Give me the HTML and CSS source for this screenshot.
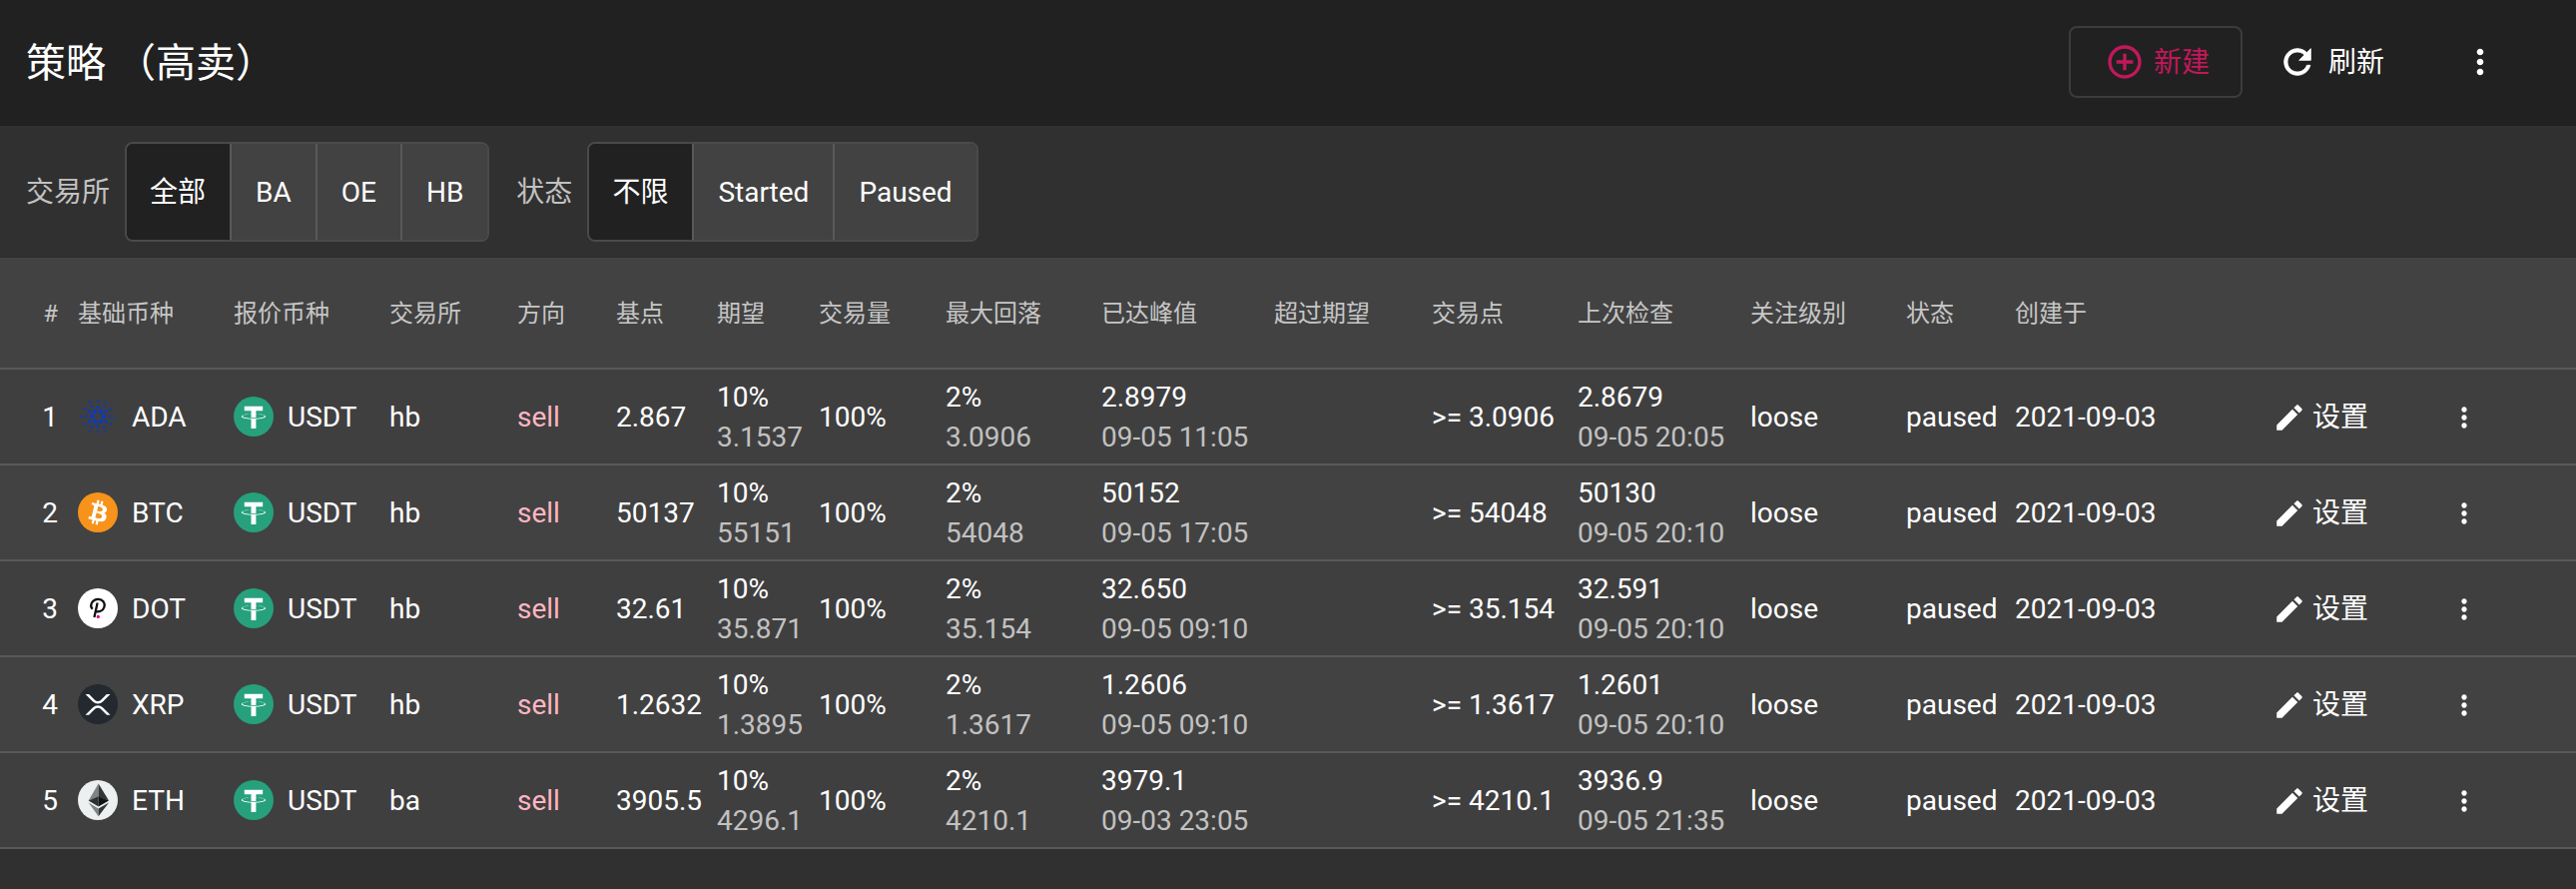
FILE: index.html
```html
<!DOCTYPE html>
<html lang="zh-CN">
<head>
<meta charset="utf-8">
<title>策略（高卖）</title>
<link rel="stylesheet" href="styles.css">
</head>
<body>
<svg class="sprite" aria-hidden="true">
  <symbol id="more" viewBox="0 0 24 24"><path d="M12 8c1.1 0 2-.9 2-2s-.9-2-2-2-2 .9-2 2 .9 2 2 2zm0 2c-1.1 0-2 .9-2 2s.9 2 2 2 2-.9 2-2-.9-2-2-2zm0 6c-1.1 0-2 .9-2 2s.9 2 2 2 2-.9 2-2-.9-2-2-2z"/></symbol>
  <symbol id="edit" viewBox="0 0 24 24"><path d="M3 17.25V21h3.75L17.81 9.94l-3.75-3.75L3 17.25zM20.71 7.04c.39-.39.39-1.02 0-1.41l-2.34-2.34c-.39-.39-1.02-.39-1.41 0l-1.83 1.83 3.75 3.75 1.83-1.83z"/></symbol>
  <symbol id="usdt" viewBox="0 0 32 32"><circle cx="16" cy="16" r="16" fill="#26a17b"/><path fill="#fff" d="M17.922 17.383v-.002c-.11.008-.677.042-1.942.042-1.01 0-1.721-.03-1.971-.042v.003c-3.888-.171-6.79-.848-6.79-1.658 0-.809 2.902-1.486 6.79-1.66v2.644c.254.018.982.061 1.988.061 1.207 0 1.812-.05 1.925-.06v-2.643c3.88.173 6.775.85 6.775 1.658 0 .81-2.895 1.485-6.775 1.657m0-3.59v-2.366h5.414V7.819H8.595v3.608h5.414v2.365c-4.4.202-7.709 1.074-7.709 2.118 0 1.044 3.309 1.915 7.709 2.118v7.582h3.913v-7.584c4.393-.202 7.694-1.073 7.694-2.116 0-1.043-3.301-1.914-7.694-2.117"/></symbol>
  <symbol id="btc" viewBox="0 0 32 32"><circle cx="16" cy="16" r="16" fill="#f7931a"/><path fill="#fff" d="M23.189 14.02c.314-2.096-1.283-3.223-3.465-3.975l.708-2.84-1.728-.43-.69 2.765c-.454-.114-.92-.22-1.385-.326l.695-2.783L15.596 6l-.708 2.839c-.376-.086-.746-.17-1.104-.26l.002-.009-2.384-.595-.46 1.846s1.283.294 1.256.312c.7.175.826.638.805 1.006l-.806 3.235c.048.012.11.03.18.057l-.183-.045-1.13 4.532c-.086.212-.303.531-.793.41.018.025-1.256-.313-1.256-.313l-.858 1.978 2.25.561c.418.105.828.215 1.231.318l-.715 2.872 1.727.43.708-2.84c.472.127.93.245 1.378.357l-.706 2.828 1.728.43.715-2.866c2.948.558 5.164.333 6.097-2.333.752-2.146-.037-3.385-1.588-4.192 1.13-.26 1.98-1.003 2.207-2.538zm-3.95 5.538c-.533 2.147-4.148.986-5.32.695l.95-3.805c1.172.293 4.929.872 4.37 3.11zm.535-5.569c-.487 1.953-3.495.96-4.47.717l.86-3.45c.975.243 4.118.696 3.61 2.733z"/></symbol>
  <symbol id="xrp" viewBox="0 0 32 32"><circle cx="16" cy="16" r="16" fill="#23292f"/><path fill="#fff" d="M23.07 8h2.89l-6.015 5.957a5.621 5.621 0 01-7.89 0L6.035 8H8.93l4.57 4.523a3.556 3.556 0 004.996 0L23.07 8zM8.895 24.563H6l6.055-5.993a5.621 5.621 0 017.89 0L26 24.562h-2.895L18.5 20a3.556 3.556 0 00-4.996 0l-4.61 4.563z"/></symbol>
  <symbol id="dot" viewBox="0 0 40 40"><circle cx="20" cy="20" r="20" fill="#fff"/><path fill="none" stroke="#111" stroke-width="2.3" d="M14.7 20.8C13 19 12.9 16 14.5 13.7C17 10 23 9.9 25.5 13.2C27.9 16.6 26.4 21.4 22.8 22.8C21 23.5 19.4 23.3 18 23.2M19.6 14.6L16.4 29"/><circle cx="20.3" cy="28.4" r="1.6" fill="#e6007a"/></symbol>
  <symbol id="eth" viewBox="0 0 40 40"><circle cx="20" cy="20" r="20" fill="#ecf0f1"/><path fill="#828384" d="M20.6 3.4V16.4L10.6 20.5z"/><path fill="#343535" d="M20.6 3.4V16.4L31 20.5z"/><path fill="#2f3030" d="M20.6 16.2V26.4L10.6 20.5z"/><path fill="#131313" d="M20.6 16.2V26.4L31 20.5z"/><path fill="#828384" d="M10.6 22.6L20.6 28.6V36.3z"/><path fill="#343535" d="M31 22.6L20.6 28.6V36.3z"/></symbol>
  <symbol id="ada" viewBox="-20 -20 40 40"><g fill="#0d3abf">
    <circle cx="-5.700" cy="0" r="2.3"/><circle cx="5.700" cy="0" r="2.3"/><circle cx="-2.900" cy="-5" r="2.3"/><circle cx="2.900" cy="-5" r="2.3"/><circle cx="-2.900" cy="5" r="2.3"/><circle cx="2.900" cy="5" r="2.3"/>
    <circle cx="0" cy="-9.8" r="1.5"/><circle cx="0" cy="9.8" r="1.5"/><circle cx="-8.4" cy="-5" r="1.7"/><circle cx="8.4" cy="-5" r="1.7"/><circle cx="-8.4" cy="5" r="1.7"/><circle cx="8.4" cy="5" r="1.7"/>
    <g opacity=".85"><circle cx="-12" cy="0" r="1.4"/><circle cx="12" cy="0" r="1.4"/><circle cx="-6" cy="-10.6" r="1.4"/><circle cx="6" cy="-10.6" r="1.4"/><circle cx="-6" cy="10.6" r="1.4"/><circle cx="6" cy="10.6" r="1.4"/>
    <circle cx="-13" cy="-7.6" r="1.4"/><circle cx="13" cy="-7.6" r="1.4"/><circle cx="-13" cy="7.6" r="1.4"/><circle cx="13" cy="7.6" r="1.4"/><circle cx="0" cy="-15.2" r="1.3"/><circle cx="0" cy="15.2" r="1.3"/>
    <circle cx="-8" cy="-14.6" r="1.2"/><circle cx="8" cy="-14.6" r="1.2"/><circle cx="-8" cy="14.6" r="1.2"/><circle cx="8" cy="14.6" r="1.2"/><circle cx="-16.6" cy="0" r="1.2"/><circle cx="16.6" cy="0" r="1.2"/></g>
  </g></symbol>
</svg>

<header class="toolbar">
  <h1 class="title">策略 （高卖）</h1>
  <button type="button" class="btn btn-new"><svg class="icon" viewBox="0 0 24 24"><path d="M13 7h-2v4H7v2h4v4h2v-4h4v-2h-4V7zm-1-5C6.48 2 2 6.48 2 12s4.480 10 10 10 10-4.480 10-10S17.520 2 12 2zm0 18c-4.410 0-8-3.590-8-8s3.590-8 8-8 8 3.590 8 8-3.590 8-8 8z"/></svg>新建</button>
  <button type="button" class="btn btn-refresh"><svg class="icon" viewBox="0 0 24 24"><path d="M17.650 6.350C16.200 4.900 14.210 4 12 4c-4.420 0-7.990 3.580-7.990 8s3.570 8 7.990 8c3.730 0 6.840-2.550 7.730-6h-2.080c-.82 2.330-3.040 4-5.650 4-3.310 0-6-2.690-6-6s2.690-6 6-6c1.660 0 3.140.69 4.220 1.780L13 11h7V4l-2.350 2.350z" stroke="currentColor" stroke-width=".5"/></svg>刷新</button>
  <button type="button" class="btn btn-menu" aria-label="更多"><svg class="icon"><use href="#more"/></svg></button>
</header>

<div class="filters">
  <span class="label" id="lbl-exchange">交易所</span>
  <div class="toggle" role="group" aria-labelledby="lbl-exchange">
    <button type="button" class="option selected" aria-pressed="true">全部</button><button type="button" class="option">BA</button><button type="button" class="option">OE</button><button type="button" class="option">HB</button>
  </div>
  <span class="label" id="lbl-state">状态</span>
  <div class="toggle" role="group" aria-labelledby="lbl-state">
    <button type="button" class="option selected" aria-pressed="true">不限</button><button type="button" class="option">Started</button><button type="button" class="option">Paused</button>
  </div>
</div>

<table class="grid">
  <colgroup>
    <col class="c-num"><col class="c-coin"><col class="c-coin"><col class="c-ex"><col class="c-side"><col class="c-base"><col class="c-expect"><col class="c-volume"><col class="c-drop"><col class="c-peak"><col class="c-over"><col class="c-point"><col class="c-check"><col class="c-watch"><col class="c-state"><col class="c-created"><col class="c-edit"><col>
  </colgroup>
  <thead>
    <tr><th class="num">#</th><th>基础币种</th><th>报价币种</th><th>交易所</th><th>方向</th><th>基点</th><th>期望</th><th>交易量</th><th>最大回落</th><th>已达峰值</th><th>超过期望</th><th>交易点</th><th>上次检查</th><th>关注级别</th><th>状态</th><th>创建于</th><th></th><th></th></tr>
  </thead>
  <tbody>
    <tr><td class="num">1</td><td><div class="coin"><svg class="logo"><use href="#ada"/></svg>ADA</div></td><td><div class="coin"><svg class="logo"><use href="#usdt"/></svg>USDT</div></td><td>hb</td><td class="sell">sell</td><td>2.867</td><td>10%<div class="sub">3.1537</div></td><td>100%</td><td>2%<div class="sub">3.0906</div></td><td>2.8979<div class="sub">09-05 11:05</div></td><td></td><td>&gt;= 3.0906</td><td>2.8679<div class="sub">09-05 20:05</div></td><td>loose</td><td>paused</td><td>2021-09-03</td><td><button type="button" class="btn btn-edit"><svg class="icon-edit"><use href="#edit"/></svg>设置</button></td><td><button type="button" class="btn" aria-label="更多"><svg class="icon-row"><use href="#more"/></svg></button></td></tr>
    <tr><td class="num">2</td><td><div class="coin"><svg class="logo"><use href="#btc"/></svg>BTC</div></td><td><div class="coin"><svg class="logo"><use href="#usdt"/></svg>USDT</div></td><td>hb</td><td class="sell">sell</td><td>50137</td><td>10%<div class="sub">55151</div></td><td>100%</td><td>2%<div class="sub">54048</div></td><td>50152<div class="sub">09-05 17:05</div></td><td></td><td>&gt;= 54048</td><td>50130<div class="sub">09-05 20:10</div></td><td>loose</td><td>paused</td><td>2021-09-03</td><td><button type="button" class="btn btn-edit"><svg class="icon-edit"><use href="#edit"/></svg>设置</button></td><td><button type="button" class="btn" aria-label="更多"><svg class="icon-row"><use href="#more"/></svg></button></td></tr>
    <tr><td class="num">3</td><td><div class="coin"><svg class="logo"><use href="#dot"/></svg>DOT</div></td><td><div class="coin"><svg class="logo"><use href="#usdt"/></svg>USDT</div></td><td>hb</td><td class="sell">sell</td><td>32.61</td><td>10%<div class="sub">35.871</div></td><td>100%</td><td>2%<div class="sub">35.154</div></td><td>32.650<div class="sub">09-05 09:10</div></td><td></td><td>&gt;= 35.154</td><td>32.591<div class="sub">09-05 20:10</div></td><td>loose</td><td>paused</td><td>2021-09-03</td><td><button type="button" class="btn btn-edit"><svg class="icon-edit"><use href="#edit"/></svg>设置</button></td><td><button type="button" class="btn" aria-label="更多"><svg class="icon-row"><use href="#more"/></svg></button></td></tr>
    <tr><td class="num">4</td><td><div class="coin"><svg class="logo"><use href="#xrp"/></svg>XRP</div></td><td><div class="coin"><svg class="logo"><use href="#usdt"/></svg>USDT</div></td><td>hb</td><td class="sell">sell</td><td>1.2632</td><td>10%<div class="sub">1.3895</div></td><td>100%</td><td>2%<div class="sub">1.3617</div></td><td>1.2606<div class="sub">09-05 09:10</div></td><td></td><td>&gt;= 1.3617</td><td>1.2601<div class="sub">09-05 20:10</div></td><td>loose</td><td>paused</td><td>2021-09-03</td><td><button type="button" class="btn btn-edit"><svg class="icon-edit"><use href="#edit"/></svg>设置</button></td><td><button type="button" class="btn" aria-label="更多"><svg class="icon-row"><use href="#more"/></svg></button></td></tr>
    <tr><td class="num">5</td><td><div class="coin"><svg class="logo"><use href="#eth"/></svg>ETH</div></td><td><div class="coin"><svg class="logo"><use href="#usdt"/></svg>USDT</div></td><td>ba</td><td class="sell">sell</td><td>3905.5</td><td>10%<div class="sub">4296.1</div></td><td>100%</td><td>2%<div class="sub">4210.1</div></td><td>3979.1<div class="sub">09-03 23:05</div></td><td></td><td>&gt;= 4210.1</td><td>3936.9<div class="sub">09-05 21:35</div></td><td>loose</td><td>paused</td><td>2021-09-03</td><td><button type="button" class="btn btn-edit"><svg class="icon-edit"><use href="#edit"/></svg>设置</button></td><td><button type="button" class="btn" aria-label="更多"><svg class="icon-row"><use href="#more"/></svg></button></td></tr>
  </tbody>
</table>
</body>
</html>
```

FILE: styles.css
```css
* { box-sizing: border-box; }

body {
  margin: 0;
  background: #303030;
  color: #fff;
  font: 400 28px/40px Roboto, "Noto Sans CJK SC", sans-serif;
}

.sprite { display: none; }

/* Buttons and icons */
.btn {
  display: inline-flex;
  align-items: center;
  padding: 0;
  border: 0;
  background: none;
  color: inherit;
  font: inherit;
}
.btn svg { fill: currentColor; flex: none; }
.icon { width: 40px; height: 40px; }
.icon-edit { width: 34px; height: 34px; }
.icon-row { width: 32px; height: 32px; }

/* Top toolbar */
.toolbar {
  display: flex;
  align-items: center;
  height: 126px;
  padding: 0 76px 2px 26px;
  background: #212121;
}
.title {
  flex: 1;
  margin: 0;
  padding-top: 4px;
  font-size: 40px;
  font-weight: 400;
  line-height: 56px;
}
.btn-new {
  height: 72px;
  padding: 2px 31px 0 34px;
  gap: 9px;
  border: 2px solid rgba(255, 255, 255, .12);
  border-radius: 8px;
  color: #c2185b;
}
.btn-refresh { gap: 11px; margin-left: 35px; padding-top: 2px; }
.btn-new .icon,
.btn-refresh .icon { margin-bottom: 2px; }
.btn-menu { margin-left: 76px; }

/* Filters */
.filters {
  display: flex;
  align-items: center;
  padding: 16px 26px;
}
.label { margin-right: 15px; padding-top: 2px; color: #c1c1c1; }
.toggle {
  display: flex;
  margin-right: 27px;
  overflow: hidden;
  border: 2px solid #4a4a4a;
  border-radius: 8px;
}
.option {
  height: 96px;
  padding: 2px 24px 0;
  border: 0;
  background: #424242;
  color: #fff;
  font: inherit;
}
.option + .option { border-left: 2px solid #595959; }
.option.selected { padding: 2px 24px 0 23px; background: #212121; }

/* Strategy table */
.grid {
  width: 100%;
  table-layout: fixed;
  border-collapse: separate;
  border-spacing: 0;
  background: #424242;
  box-shadow: 0 2px 4px rgba(0, 0, 0, .4);
}
.grid th,
.grid td {
  padding: 2px 0 0;
  border-bottom: 2px solid #595959;
  text-align: left;
  white-space: nowrap;
}
.grid th {
  height: 112px;
  color: #c6c6c6;
  font-size: 24px;
  font-weight: 400;
}
.grid td { height: 96px; }
.grid tbody tr:nth-child(odd) { background: #3f3f3f; }
.grid .num { padding-right: 20px; text-align: right; }
.grid td .btn { display: flex; }
.coin { display: flex; align-items: center; gap: 14px; }
.logo { width: 40px; height: 40px; margin-bottom: 2px; }
.sub { color: #c1c1c1; }
.sell { color: #ffb6c1; }
.btn-edit { gap: 6px; }

.c-num { width: 78px; }
.c-coin { width: 156px; }
.c-ex { width: 128px; }
.c-side { width: 99px; }
.c-base { width: 101px; }
.c-expect { width: 102px; }
.c-volume { width: 127px; }
.c-drop { width: 156px; }
.c-peak { width: 173px; }
.c-over { width: 158px; }
.c-point { width: 146px; }
.c-check { width: 173px; }
.c-watch { width: 156px; }
.c-state { width: 109px; }
.c-created { width: 258px; }
.c-edit { width: 176px; }
```
